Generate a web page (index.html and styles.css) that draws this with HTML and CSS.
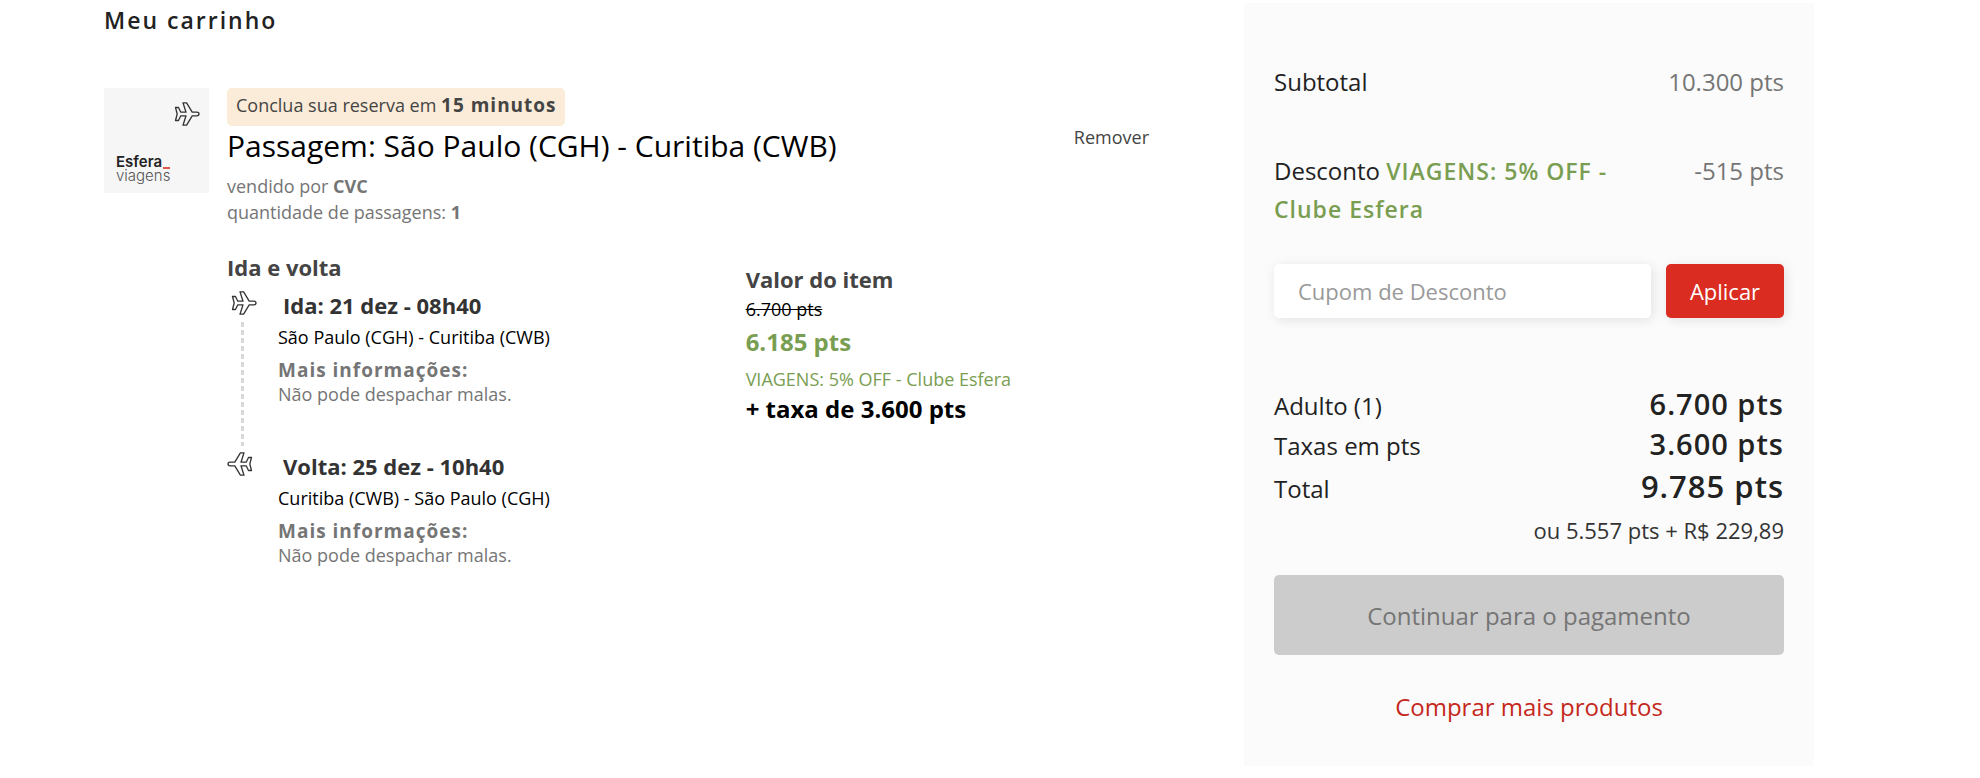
FILE: index.html
```
<!DOCTYPE html>
<html lang="pt-BR">
<head>
    <meta charset="UTF-8">
    <meta name="viewport" content="width=device-width, initial-scale=1.0">
    <title>Meu carrinho</title>
    <link rel="stylesheet" href="styles.css">
</head>
<body>

    <svg class="sprite" aria-hidden="true">
        <symbol id="plane" viewBox="0 0 26 26">
            <path d="M1.500 6.500H4.500L6.800 11.200H12L9 1.800H12.600L18.200 11.200H22.800C24.200 11.200 25 12 25 13S24.200 14.800 22.800 14.800H18.200L12.600 24.200H9L12 14.800H6.800L4.500 19.500H1.500L3.200 13Z"/>
        </symbol>
    </svg>

    <div class="page">
        <!-- Cart -->
        <main class="cart">
            <h1>Meu carrinho</h1>

            <article class="item">
                <div class="thumb">
                    <svg class="plane"><use href="#plane"/></svg>
                    <div class="brand">
                        <b>Esfera</b>
                        <span>viagens</span>
                    </div>
                </div>

                <div class="item-body">
                    <div class="item-top">
                        <div>
                            <p class="timer">Conclua sua reserva em <strong>15 minutos</strong></p>
                            <h2>Passagem: São Paulo (CGH) - Curitiba (CWB)</h2>
                            <p class="seller">vendido por <b>CVC</b></p>
                            <p class="seller">quantidade de passagens: <b>1</b></p>
                        </div>
                        <button type="button" class="remove">Remover</button>
                    </div>

                    <div class="details">
                        <section class="trip">
                            <h3>Ida e volta</h3>
                            <div class="leg outbound">
                                <div class="track">
                                    <svg class="plane"><use href="#plane"/></svg>
                                    <div class="dash"></div>
                                </div>
                                <div class="leg-info">
                                    <h4>Ida: 21 dez - 08h40</h4>
                                    <p class="route">São Paulo (CGH) - Curitiba (CWB)</p>
                                    <p class="more"><strong>Mais informações:</strong>Não pode despachar malas.</p>
                                </div>
                            </div>
                            <div class="leg inbound">
                                <div class="track">
                                    <svg class="plane"><use href="#plane"/></svg>
                                </div>
                                <div class="leg-info">
                                    <h4>Volta: 25 dez - 10h40</h4>
                                    <p class="route">Curitiba (CWB) - São Paulo (CGH)</p>
                                    <p class="more"><strong>Mais informações:</strong>Não pode despachar malas.</p>
                                </div>
                            </div>
                        </section>

                        <section class="price">
                            <h3>Valor do item</h3>
                            <p class="old"><s>6.700 pts</s></p>
                            <p class="new">6.185 pts</p>
                            <p class="promo">VIAGENS: 5% OFF - Clube Esfera</p>
                            <p class="fee">+ taxa de 3.600 pts</p>
                        </section>
                    </div>
                </div>
            </article>
        </main>

        <!-- Summary -->
        <aside class="summary">
            <div class="line">
                <span>Subtotal</span>
                <span class="muted">10.300 pts</span>
            </div>
            <div class="line discount">
                <span class="label">Desconto <strong>VIAGENS: 5% OFF - Clube Esfera</strong></span>
                <span class="muted">-515 pts</span>
            </div>

            <form class="coupon">
                <input type="text" placeholder="Cupom de Desconto" aria-label="Cupom de Desconto">
                <button type="button">Aplicar</button>
            </form>

            <div class="totals">
                <div class="line"><span>Adulto (1)</span><strong>6.700 pts</strong></div>
                <div class="line"><span>Taxas em pts</span><strong>3.600 pts</strong></div>
                <div class="line total"><span>Total</span><strong>9.785 pts</strong></div>
                <p class="or">ou 5.557 pts + R$ 229,89</p>
            </div>

            <button type="button" class="checkout" disabled>Continuar para o pagamento</button>
            <a href="#" class="keep-buying">Comprar mais produtos</a>
        </aside>
    </div>

</body>
</html>
```
FILE: styles.css
```
* {
    box-sizing: border-box;
}
body {
    margin: 0;
    font-family: "Open Sans", "Noto Sans", sans-serif;
    font-size: 18px;
    line-height: 24px;
    color: #222;
    background-color: #fff;
}
h1, h2, h3, h4, p {
    margin: 0;
}
button, input {
    font-family: inherit;
    border: none;
}
.sprite {
    display: none;
}
.plane {
    display: block;
    width: 26px;
    height: 26px;
    fill: none;
    stroke: #333;
    stroke-width: 1.3;
    stroke-linejoin: round;
}
.page {
    display: grid;
    grid-template-columns: 1fr 570px;
    gap: 95px;
    align-items: start;
    padding: 3px 166px 12px 104px;
}

/* Cart */
.cart h1 {
    font-size: 23px;
    font-weight: 600;
    line-height: 34px;
    letter-spacing: 2px;
    margin-bottom: 51px;
}
.item {
    display: flex;
    gap: 18px;
}
.thumb {
    display: flex;
    flex-direction: column;
    justify-content: space-between;
    flex: none;
    width: 105px;
    height: 105px;
    padding: 13px 9px 10px 12px;
    background-color: #f6f6f6;
}
.thumb .plane {
    align-self: flex-end;
}
.brand {
    font-family: Inter, sans-serif;
    font-size: 15px;
    line-height: 14px;
}
.brand b {
    display: flex;
    align-items: flex-end;
    font-weight: 600;
}
.brand b::after {
    content: "";
    width: 7px;
    height: 2px;
    margin-left: 1px;
    background-color: #e0574f;
}
.brand span {
    display: block;
    font-weight: 300;
    color: #555;
}
.item-body {
    flex: 1;
}
.item-top {
    display: flex;
    justify-content: space-between;
    align-items: flex-start;
}
.timer {
    display: inline-block;
    padding: 5px 8px 9px 9px;
    color: #444;
    background-color: #faecd8;
    border-radius: 5px;
    vertical-align: top;
}
.timer strong, .more strong {
    font-size: 19px;
    letter-spacing: 1px;
}
.item h2 {
    font-size: 30px;
    font-weight: 400;
    line-height: 40px;
    color: #000;
    margin-bottom: 7px;
}
.seller {
    line-height: 26px;
    color: #757575;
}
.remove {
    margin-top: 37px;
    padding: 0;
    font-size: 18px;
    line-height: 24px;
    color: #444;
    background: none;
    cursor: pointer;
}
.details {
    display: grid;
    grid-template-columns: 9fr 7fr;
    margin-top: 27px;
}
.details h3 {
    font-size: 22px;
    line-height: 30px;
    color: #444;
}
.trip h3 {
    margin-bottom: 8px;
}
.leg {
    display: flex;
    gap: 21px;
}
.track {
    display: flex;
    flex-direction: column;
    align-items: center;
    width: 30px;
}
.outbound .plane {
    align-self: flex-end;
}
.inbound .plane {
    align-self: flex-start;
    transform: scaleX(-1);
}
.dash {
    flex: 1;
    width: 3px;
    margin: 6px 0 5px;
    background: repeating-linear-gradient(#d8d8d8 0 5px, transparent 5px 8px);
}
.outbound .leg-info {
    padding-bottom: 45px;
}
.leg h4 {
    font-size: 22px;
    line-height: 30px;
    color: #333;
    padding-left: 5px;
    margin-bottom: 5px;
}
.route {
    color: #000;
    margin-bottom: 9px;
}
.more {
    color: #757575;
}
.more strong {
    display: block;
}
.price {
    padding-top: 12px;
}
.old {
    color: #000;
    margin: 3px 0 5px;
}
.new, .fee {
    font-size: 24px;
    font-weight: 700;
    line-height: 32px;
}
.new {
    color: #7a9e51;
    margin-bottom: 9px;
}
.promo {
    color: #7a9e51;
    margin-bottom: 2px;
}
.fee {
    color: #000;
}

/* Summary */
.summary {
    padding: 60px 30px 40px;
    font-size: 24px;
    line-height: 38px;
    background-color: #fbfbfb;
}
.line {
    display: flex;
    justify-content: space-between;
    align-items: baseline;
}
.muted {
    color: #757575;
}
.discount {
    margin: 51px 0 36px;
}
.discount .label {
    max-width: 70%;
}
.discount strong {
    font-size: 23px;
    font-weight: 600;
    letter-spacing: 1px;
    color: #7a9e51;
}
.coupon {
    display: flex;
    gap: 15px;
}
.coupon input, .coupon button {
    height: 54px;
    font-size: 22px;
    border-radius: 5px;
    box-shadow: 2px 2px 12px rgba(0, 0, 0, 0.1);
}
.coupon input {
    flex: 1;
    min-width: 0;
    padding: 0 24px;
    background-color: #fff;
}
.coupon input::placeholder {
    color: #999;
}
.coupon button {
    width: 118px;
    font-weight: 500;
    color: #fff;
    background-color: #da2c20;
    cursor: pointer;
}
.totals {
    margin: 67px 0 29px;
}
.totals strong {
    font-size: 29px;
    font-weight: 600;
    letter-spacing: 1px;
}
.totals .total {
    line-height: 42px;
}
.totals .total strong {
    font-size: 31px;
}
.or {
    margin-top: 4px;
    font-size: 22px;
    line-height: 32px;
    text-align: right;
    color: #333;
}
.checkout {
    display: block;
    width: 100%;
    height: 80px;
    font-size: 24px;
    color: #757575;
    background-color: #ccc;
    border-radius: 5px;
}
.keep-buying {
    display: block;
    margin-top: 33px;
    text-align: center;
    text-decoration: none;
    color: #c5281c;
}
```
